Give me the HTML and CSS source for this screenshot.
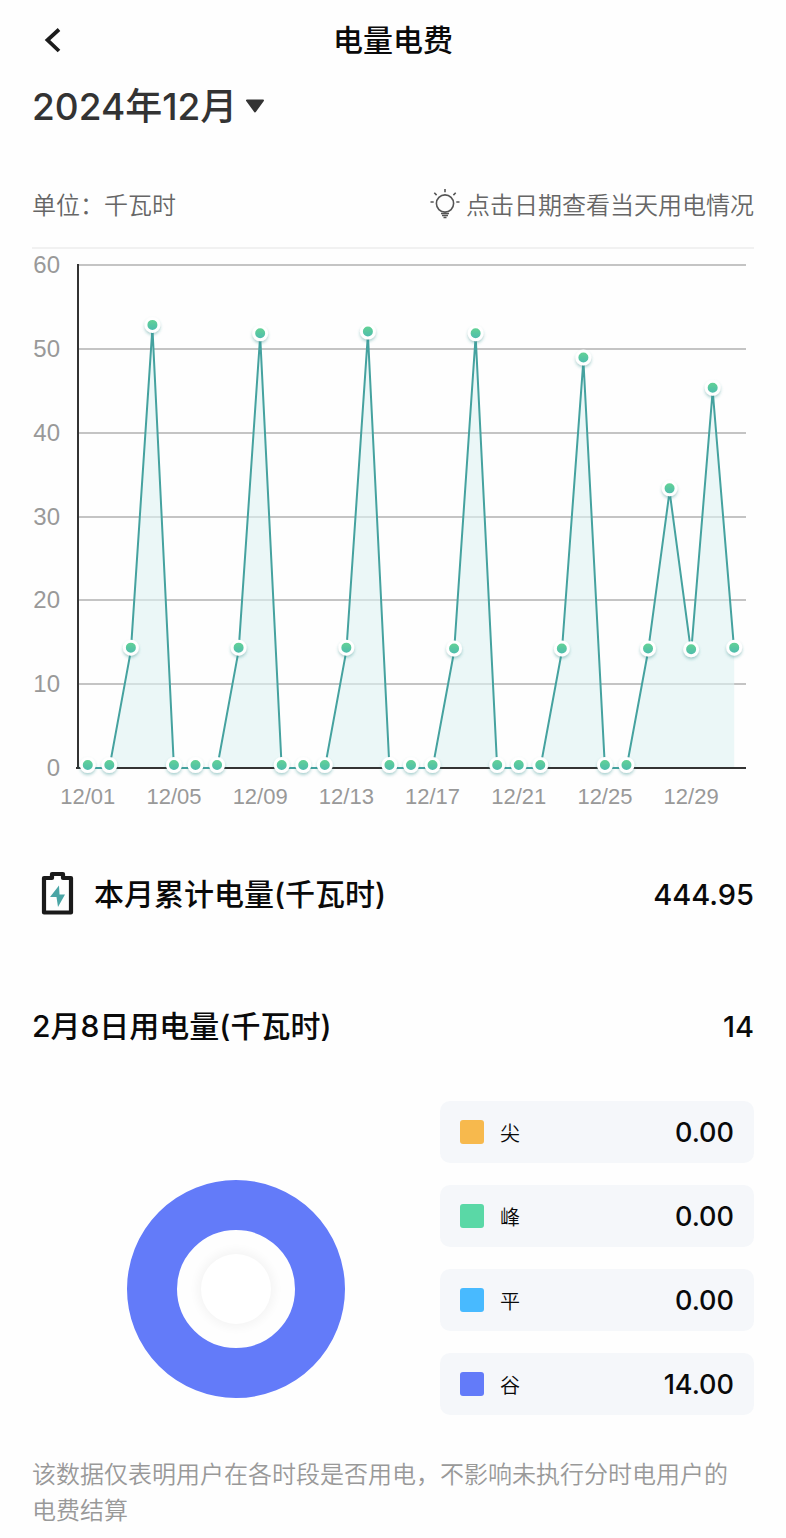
FILE: index.html
```html
<!DOCTYPE html>
<html lang="zh-CN">
<head>
    <meta charset="UTF-8">
    <meta name="viewport" content="width=device-width, initial-scale=1.0">
    <title>电量电费</title>
    <link rel="stylesheet" href="styles.css">
</head>
<body>
    <header class="navbar">
        <button class="back-btn" type="button" aria-label="返回">
            <svg width="22" height="28" viewBox="0 0 22 28">
                <path d="M19 3.500 7.500 14 19 25" fill="none" stroke="#1c1c1c" stroke-width="3.800"/>
            </svg>
        </button>
        <h1>电量电费</h1>
    </header>

    <main class="content">
        <button class="month-btn" type="button">
            <span>2024年12月</span>
            <svg width="20" height="14" viewBox="0 0 20 14">
                <path d="M2 1.500h16l-8 11z" fill="#333" stroke="#333" stroke-width="2" stroke-linejoin="round"/>
            </svg>
        </button>

        <div class="chart-head">
            <span>单位：千瓦时</span>
            <span class="tip">
                <svg width="32" height="32" viewBox="0 0 32 32" fill="none" stroke="#555" stroke-width="1.600">
                    <circle cx="16" cy="15.500" r="8.600"/>
                    <path d="M16 1v3.200M1.500 14h3.200M27.300 14h3.200M5.300 4.800l2.300 2.300M26.700 4.800l-2.300 2.300M12 25.500h8M13 27.500h6M14.500 29.500h3"/>
                </svg>
                <span>点击日期查看当天用电情况</span>
            </span>
        </div>

        <svg id="chart" class="chart" viewBox="32 250 722 570" role="img" aria-label="每日用电量">
            <defs>
                <linearGradient id="dot-fill" x1="0" y1="0" x2="0" y2="1">
                    <stop offset="0" stop-color="#65d592"/>
                    <stop offset="1" stop-color="#4bb9b0"/>
                </linearGradient>
                <filter id="dot-shadow" x="-50%" y="-50%" width="200%" height="200%">
                    <feDropShadow dx="0" dy="2" stdDeviation="1.500" flood-color="#2f8f8c" flood-opacity="0.400"/>
                </filter>
            </defs>
        </svg>

        <section class="summary">
            <svg class="battery" width="34" height="46" viewBox="0 0 34 46">
                <path d="M4 7h8V3h11v4h8v34.500H4z" fill="none" stroke="#1a1a1a" stroke-width="4.200" stroke-linejoin="round"/>
                <path d="M15.500 5h4v5.500h-4z" fill="#fff"/>
                <path d="M19 14.500 10 26h6.500l1.500 10 7-12.500h-5.500z" fill="#4aa5a5"/>
            </svg>
            <h2>本月累计电量(千瓦时)</h2>
            <span class="total">444.95</span>
        </section>

        <section class="summary">
            <h2>2月8日用电量(千瓦时)</h2>
            <span class="total">14</span>
        </section>

        <section class="breakdown">
            <div class="donut"><div class="donut-center"></div></div>
            <ul class="legend">
                <li><i class="swatch sharp"></i><span>尖</span><b>0.00</b></li>
                <li><i class="swatch peak"></i><span>峰</span><b>0.00</b></li>
                <li><i class="swatch flat"></i><span>平</span><b>0.00</b></li>
                <li><i class="swatch valley"></i><span>谷</span><b>14.00</b></li>
            </ul>
        </section>

        <p class="note">该数据仅表明用户在各时段是否用电，不影响未执行分时电用户的电费结算</p>
    </main>

    <script src="chart.js"></script>
</body>
</html>
```
FILE: styles.css
```css
* {
    box-sizing: border-box;
}
body {
    margin: 0;
    background: #fefefe;
    color: #0a0a0a;
    font-family: Inter, "Noto Sans CJK SC", sans-serif;
}
button {
    border: none;
    background: none;
    padding: 0;
    font: inherit;
    cursor: pointer;
}
h1, h2 {
    margin: 0;
    padding-bottom: 5px;
    font-size: 30px;
    font-weight: 500;
}
svg {
    display: block;
}
.navbar {
    display: grid;
    grid-template-columns: 1fr auto 1fr;
    align-items: center;
    height: 80px;
    padding: 0 40px;
}
.back-btn {
    justify-self: start;
}
.content {
    padding: 0 32px;
}
.month-btn {
    display: flex;
    align-items: center;
    gap: 8px;
    height: 52px;
    color: #333;
    font-size: 37px;
    font-weight: 500;
}
.month-btn span {
    padding-bottom: 5px;
}
.chart-head {
    display: flex;
    justify-content: space-between;
    align-items: center;
    height: 89px;
    margin-top: 28px;
    border-bottom: 2px solid #f1f1f1;
    color: #666;
    font-size: 24px;
    font-weight: 350;
}
.tip {
    display: flex;
    align-items: center;
    gap: 5px;
}
.chart {
    width: 100%;
    height: auto;
}
.grid-line {
    stroke: #c4c4c4;
    stroke-width: 2;
}
.axis-line {
    stroke: #333;
    stroke-width: 2;
}
.area {
    fill: rgba(222, 241, 241, 0.6);
}
.line {
    fill: none;
    stroke: #45a29f;
    stroke-width: 2;
    stroke-linejoin: bevel;
}
.dot {
    fill: url(#dot-fill);
    stroke: #fff;
    stroke-width: 3;
    filter: url(#dot-shadow);
}
.tick {
    fill: #999;
    font-family: "Liberation Sans", sans-serif;
    font-size: 24px;
}
.tick-x {
    font-size: 22px;
}
.summary {
    display: flex;
    align-items: center;
    height: 132px;
}
.chart + .summary {
    margin-top: 9px;
}
.battery {
    margin: 0 20px 0 8px;
}
.total {
    margin-left: auto;
    font-size: 29px;
    font-weight: 500;
}
.breakdown {
    display: grid;
    grid-template-columns: 13fr 10fr;
    margin-top: 9px;
}
.donut {
    display: flex;
    align-items: center;
    justify-content: center;
    align-self: center;
    justify-self: center;
    width: 218px;
    height: 218px;
    margin-top: 62px;
    border: 50px solid #637bf9;
    border-radius: 50%;
}
.donut-center {
    width: 70px;
    height: 70px;
    border-radius: 50%;
    background: #fff;
    box-shadow: 0 0 10px 4px rgba(0, 0, 0, 0.04);
}
.legend {
    display: grid;
    gap: 22px;
    margin: 0;
    padding: 0;
    list-style: none;
}
.legend li {
    display: flex;
    align-items: center;
    gap: 16px;
    height: 62px;
    padding: 0 20px;
    border-radius: 10px;
    background: #f5f7fa;
    font-size: 20px;
    font-weight: 350;
}
.legend b {
    margin-left: auto;
    font-size: 27px;
    font-weight: 500;
}
.swatch {
    width: 24px;
    height: 24px;
    border-radius: 3px;
}
.sharp {
    background: #f7b94d;
}
.peak {
    background: #5ad8a6;
}
.flat {
    background: #48baff;
}
.valley {
    background: #637bf9;
}
.note {
    margin: 42px 0 0;
    padding: 0 16px 8px 0;
    color: #999;
    font-size: 24px;
    font-weight: 350;
    line-height: 36px;
}
```
FILE: chart.js
```javascript
const usage = [
    0, 0, 14, 52.5, 0, 0, 0, 14, 51.5, 0,
    0, 0, 14, 51.7, 0, 0, 0, 13.9, 51.5, 0,
    0, 0, 13.9, 48.6, 0, 0, 13.9, 33, 13.8, 45, 14
];

const chart = document.getElementById('chart');
const left = 78;
const right = 746;
const top60 = 266;
const bottom = 769;
const step = (right - left) / usage.length;

function add(name, attrs, text) {
    const el = document.createElementNS('http://www.w3.org/2000/svg', name);
    for (const key in attrs) el.setAttribute(key, attrs[key]);
    if (text) el.textContent = text;
    chart.appendChild(el);
}

function yOf(value) {
    return bottom - value * (bottom - top60) / 60;
}

// grid and y axis labels
for (let v = 0; v <= 60; v += 10) {
    const y = Math.round(yOf(v));
    if (v > 0) add('line', { class: 'grid-line', x1: left, x2: right, y1: y, y2: y });
    add('text', { class: 'tick', x: 60, y: y + 8, 'text-anchor': 'end' }, String(v));
}

const points = usage.map((v, i) => [left + step * (i + 0.5) - 1, yOf(v)]);
const path = points.map(p => p.join(' ')).join(' L');
add('path', { class: 'area', d: `M${path} L${points[30][0]} ${bottom} L${points[0][0]} ${bottom}Z` });
add('line', { class: 'axis-line', x1: left, x2: left, y1: top60 - 1, y2: bottom + 1 });
add('line', { class: 'axis-line', x1: left - 2, x2: right, y1: bottom, y2: bottom });
add('path', { class: 'line', d: `M${path}` });

// one marker per day, a date label every four days
points.forEach(([x, y], i) => {
    add('circle', { class: 'dot', cx: x, cy: y - 3, r: 6.5 });
    if (i % 4 === 0 && i < 30) {
        const day = String(i + 1).padStart(2, '0');
        add('text', { class: 'tick tick-x', x: x, y: 805, 'text-anchor': 'middle' }, `12/${day}`);
    }
});
```
